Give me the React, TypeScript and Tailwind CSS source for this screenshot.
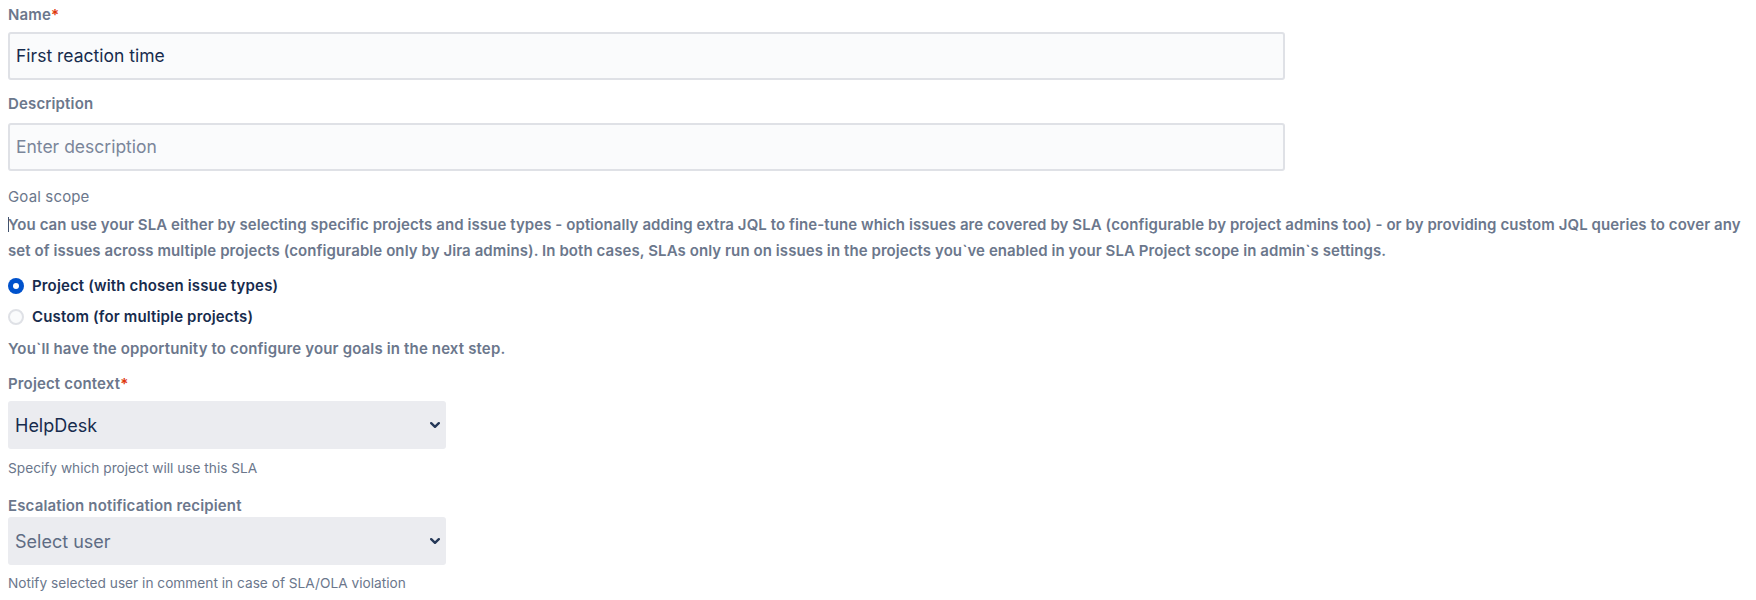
import React from 'react';

function Label({ text, required }: { text: string; required?: boolean }) {
  return (
    <div className="h-5 text-[15px] font-semibold leading-5 tracking-[0.15px] text-[#6b778c]">
      {text}
      {required && <span className="text-[#de350b]">*</span>}
    </div>
  );
}

function Radio({ checked, label }: { checked?: boolean; label: string }) {
  return (
    <div className="flex h-6 items-center gap-2">
      {checked ? (
        <span className="flex h-4 w-4 items-center justify-center rounded-full bg-[#0052cc]">
          <span className="h-[6px] w-[6px] rounded-full bg-white" />
        </span>
      ) : (
        <span className="h-4 w-4 rounded-full border-2 border-[#dfe1e6] bg-[#fafbfc]" />
      )}
      <span className="text-[15px] font-semibold tracking-[0.15px] text-[#172b4d]">{label}</span>
    </div>
  );
}

function Select({ value, placeholder }: { value?: string; placeholder?: string }) {
  return (
    <div className="flex h-12 w-[438px] items-center justify-between rounded-[3px] bg-[#ebecf0] pl-[7px] pr-[6px]">
      <span className={'text-[18px] ' + (value ? 'text-[#172b4d]' : 'text-[#5e6c84]')}>
        {value ?? placeholder}
      </span>
      <svg width="10" height="6" viewBox="0 0 10 6" fill="none">
        <path d="M1.2 1.2 L5 4.8 L8.8 1.2" stroke="#253858" strokeWidth="2.4" strokeLinecap="round" strokeLinejoin="round" />
      </svg>
    </div>
  );
}

export default function App() {
  return (
    <div className="min-h-[600px] bg-white px-2 pt-[5px] font-['Inter',sans-serif]">
      <Label text="Name" required />
      <div className="mt-[7px] flex h-12 w-[1277px] items-center rounded-[3px] border-2 border-[#dfe1e6] bg-[#fafbfc] pl-[6px] text-[17.5px] text-[#172b4d]">
        First reaction time
      </div>

      <div className="mt-[14px]">
        <Label text="Description" />
      </div>
      <div className="mt-[9px] flex h-12 w-[1277px] items-center rounded-[3px] border-2 border-[#dfe1e6] bg-[#fafbfc] pl-[6px] text-[17.5px] text-[#7a869a]">
        Enter description
      </div>

      <div className="mt-4 h-5 text-[15px] leading-5 tracking-[0.15px] text-[#6b778c]">Goal scope</div>
      <p className="relative mt-[5px] text-[15px] font-semibold leading-[26px] tracking-[0.08px] text-[#6b778c]">
        <span className="absolute left-0 top-[5px] h-[15px] w-px bg-[#42526e]" />
        You can use your SLA either by selecting specific projects and issue types - optionally adding extra JQL to fine-tune which issues are covered by SLA (configurable by project admins too) - or by providing custom JQL queries to cover any set of issues across multiple projects (configurable only by Jira admins). In both cases, SLAs only run on issues in the projects you`ve enabled in your SLA Project scope in admin`s settings.
      </p>

      <div className="mt-[10px] flex flex-col gap-[7px]">
        <Radio checked label="Project (with chosen issue types)" />
        <Radio label="Custom (for multiple projects)" />
      </div>

      <div className="mt-[10px] h-5 text-[15px] font-semibold leading-5 tracking-[0.15px] text-[#6b778c]">
        You`ll have the opportunity to configure your goals in the next step.
      </div>

      <div className="mt-[15px]">
        <Label text="Project context" required />
      </div>
      <div className="mt-[7px]">
        <Select value="HelpDesk" />
      </div>
      <div className="mt-[11px] h-4 text-[13.7px] leading-4 text-[#6b778c]">
        Specify which project will use this SLA
      </div>

      <div className="mt-[20px]">
        <Label text="Escalation notification recipient" />
      </div>
      <div className="mt-[1px]">
        <Select placeholder="Select user" />
      </div>
      <div className="mt-[10px] h-4 text-[13.7px] leading-4 text-[#6b778c]">
        Notify selected user in comment in case of SLA/OLA violation
      </div>
    </div>
  );
}
